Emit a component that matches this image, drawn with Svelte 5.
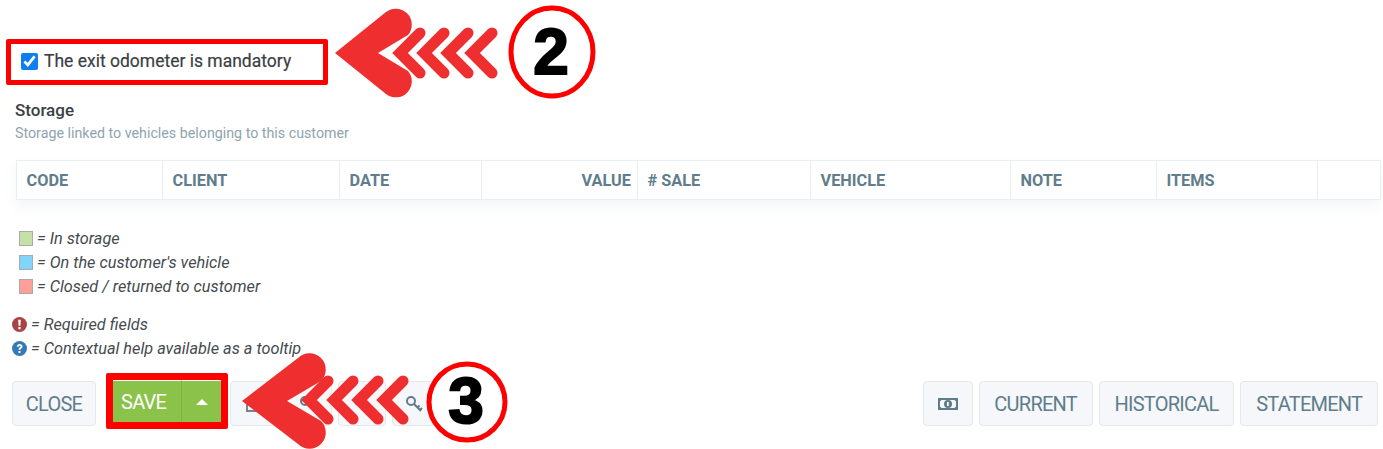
<script lang="ts">
  const columns = [
    { label: 'CODE', width: 146 },
    { label: 'CLIENT', width: 177 },
    { label: 'DATE', width: 142 },
    { label: 'VALUE', width: 156, right: true },
    { label: '# SALE', width: 173 },
    { label: 'VEHICLE', width: 200 },
    { label: 'NOTE', width: 146 },
    { label: 'ITEMS', width: 161 },
    { label: '', width: 63 }
  ];

  const legend = [
    { color: '#c5e1a5', text: '= In storage' },
    { color: '#81d4fa', text: "= On the customer's vehicle" },
    { color: '#ff9f99', text: '= Closed / returned to customer' }
  ];

  const chevronOffsets = [0, 1, 2, 3];
</script>

<div class="page">
  <div class="marked check-box">
    <label class="check">
      <input type="checkbox" checked />
      <span>The exit odometer is mandatory</span>
    </label>
  </div>

  <h4>Storage</h4>
  <p class="sub">Storage linked to vehicles belonging to this customer</p>

  <table>
    <thead>
      <tr>
        {#each columns as col}
          <th class:right={col.right} style={`width:${col.width}px`}>{col.label}</th>
        {/each}
      </tr>
    </thead>
  </table>

  <ul class="legend">
    {#each legend as item}
      <li><i class="swatch" style={`background:${item.color}`}></i>{item.text}</li>
    {/each}
  </ul>

  <ul class="notes">
    <li>
      <svg viewBox="0 0 16 16" width="15" height="15">
        <circle cx="8" cy="8" r="8" fill="#a94442" />
        <path d="M6.600 3h2.800l-.4 6.400H7zM6.800 10.600h2.400V13H6.800z" fill="#fff" />
      </svg>
      = Required fields
    </li>
    <li>
      <svg viewBox="0 0 16 16" width="15" height="15">
        <circle cx="8" cy="8" r="8" fill="#337ab7" />
        <path d="M5 6.200C5.200 4.400 6.400 3.200 8.200 3.200c1.700 0 3 1 3 2.600 0 1.300-.8 1.900-1.600 2.400-.5.300-.6.600-.6 1.100H7c0-1.200.3-1.800 1.200-2.400.6-.4.900-.6.900-1.100 0-.5-.4-.8-.9-.8-.6 0-1 .4-1.100 1zM6.900 10.600h2.200v2.200H6.900z" fill="#fff" />
      </svg>
      = Contextual help available as a tooltip
    </li>
  </ul>

  <div class="actions">
    <button class="btn close">CLOSE</button>
    <div class="marked save-box">
      <button class="save">SAVE</button>
      <button class="save caret" aria-label="More"><i></i></button>
    </div>
    <button class="btn icon first" aria-label="Copy">
      <svg viewBox="0 0 18 18" width="18" height="18" fill="none" stroke="#607d8b" stroke-width="1.800">
        <rect x="2" y="6" width="10" height="10" />
        <path d="M6 6V2h10v10h-4" />
      </svg>
    </button>
    {#each [0, 1, 2] as n}
      <button class="btn icon" class:last-key={n === 2} aria-label={`Key ${n + 1}`}>
        <svg viewBox="0 0 18 18" width="18" height="18" fill="none" stroke="#607d8b" stroke-width="2">
          <circle cx="6" cy="6" r="4" />
          <path d="M9 9l7 7M12.500 12.500l2-2M15 15l2-2" />
        </svg>
      </button>
    {/each}

    <div class="spacer"></div>

    <button class="btn icon money" aria-label="Money">
      <svg viewBox="0 0 20 14" width="20" height="14">
        <path fill-rule="evenodd" d="M0 1h20v12H0zM3.500 3 2 4.500v5L3.500 11h13l1.500-1.500v-5L16.500 3z" fill="#607d8b" />
        <circle cx="10" cy="7" r="4" fill="#607d8b" />
        <path d="M9 5h1.800v4H9z" fill="#f5f7fa" />
      </svg>
    </button>
    <button class="btn">CURRENT</button>
    <button class="btn">HISTORICAL</button>
    <button class="btn">STATEMENT</button>
  </div>

  <svg class="overlay" viewBox="0 0 1383 449" width="1383" height="449">
    <g>
      <path class="head" d="M335 53 386 12A16 16 0 0 1 408 35L378 53 408 71A16 16 0 0 1 386 94Z" />
      {#each chevronOffsets as n}
        <path class="chevron" d="M420 33 400 53 420 73" transform={`translate(${n * 24} 0)`} />
      {/each}
      <ellipse class="ring" cx="552" cy="52" rx="41" ry="44" />
      <text x="551" y="74">2</text>
    </g>
    <g>
      <path class="head" d="M242 401 298 358A16 16 0 0 1 321 381L287 401 321 421A16 16 0 0 1 298 444Z" />
      {#each chevronOffsets as n}
        <path class="chevron" d="M328 381 309 400 328 419" transform={`translate(${n * 25} 0)`} />
      {/each}
      <circle class="ring" cx="467" cy="402" r="38" />
      <text x="466" y="423">3</text>
    </g>
  </svg>
</div>

<style>
  :global(body) {
    margin: 0;
    background: #fff;
  }

  .page {
    position: relative;
    width: 1383px;
    height: 449px;
    overflow: hidden;
    box-sizing: border-box;
    padding: 39px 5px 0 12px;
    font-family: Roboto, sans-serif;
    color: #3a3f44;
  }

  .marked {
    box-sizing: border-box;
    border-style: solid;
    border-color: #f00;
    border-radius: 2px;
  }

  .check-box {
    width: 322px;
    height: 46px;
    margin-left: -6px;
    display: flex;
    align-items: center;
    padding-left: 10px;
    border-width: 5px;
  }

  .check {
    display: flex;
    align-items: center;
    gap: 6px;
    font-size: 17.500px;
    -webkit-text-stroke: 0.2px #3a3f44;
    position: relative;
    top: -1px;
  }

  .check input {
    width: 17px;
    height: 17px;
    margin: 0;
    accent-color: #0d7ff2;
  }

  h4 {
    margin: 15px 0 0 3px;
    font-size: 17px;
    line-height: 20px;
    font-weight: 500;
  }

  .sub {
    margin: 4px 0 0 3px;
    font-size: 14.250px;
    line-height: 18px;
    color: #90a4ae;
  }

  table {
    border-collapse: collapse;
    table-layout: fixed;
    width: 1364px;
    margin: 18px 0 0 4px;
    box-shadow: 0 6px 12px rgba(96, 125, 139, 0.08);
  }

  th {
    box-sizing: border-box;
    height: 39px;
    padding: 0 9.500px;
    border: 1px solid #e9eef0;
    font-size: 16.300px;
    font-weight: 700;
    text-align: left;
    color: #607d8b;
  }

  th.right {
    text-align: right;
    padding-right: 6px;
  }

  .legend,
  .notes {
    list-style: none;
    margin: 0;
    padding: 0;
    font-size: 16.300px;
    font-style: italic;
    line-height: 24px;
    color: #454a4f;
  }

  .legend {
    margin: 27px 0 0 7px;
  }

  .swatch {
    display: inline-block;
    box-sizing: border-box;
    width: 14px;
    height: 15px;
    margin-right: 4px;
    border: 1px solid #aaa;
    vertical-align: -2px;
  }

  .notes {
    margin-top: 14px;
  }

  .notes svg {
    vertical-align: -2px;
  }

  .actions {
    display: flex;
    align-items: flex-start;
    gap: 6px;
    margin-top: 20px;
  }

  .btn {
    box-sizing: border-box;
    height: 45px;
    padding: 0 14.750px;
    background: #f5f7fa;
    border: 1px solid #e4e9ec;
    border-radius: 4px;
    font: 400 20px Roboto, sans-serif;
    letter-spacing: -0.75px;
    color: #607d8b;
  }

  .btn svg {
    display: block;
    margin: 0 auto;
  }

  .close {
    width: 84px;
    padding: 0;
  }

  .icon {
    width: 48px;
    padding: 0;
  }

  .first {
    margin-left: -4px;
  }

  .last-key {
    width: 44px;
  }

  .money {
    width: 50px;
  }

  .spacer {
    flex: 1;
  }

  .save-box {
    display: flex;
    height: 56px;
    margin: -8px 0 -3px 4px;
    border-width: 7px;
    background: #fff;
  }

  .save {
    box-sizing: border-box;
    width: 68px;
    height: 42px;
    padding: 0 0 0 8px;
    background: #8bc34a;
    border: 0;
    border-top: 1px solid #fff;
    font: 400 20px Roboto, sans-serif;
    letter-spacing: -0.75px;
    text-align: left;
    color: #fff;
  }

  .caret {
    width: 40px;
    padding: 0;
    border-left: 1px solid #7cb342;
  }

  .caret i {
    display: block;
    width: 0;
    margin: 0 auto;
    border: 6px solid transparent;
    border-top: 0;
    border-bottom: 6px solid #fff;
  }

  .overlay {
    position: absolute;
    inset: 0;
    pointer-events: none;
  }

  .head {
    fill: #ef2f2f;
  }

  .chevron {
    fill: none;
    stroke: #ef2f2f;
    stroke-width: 11;
    stroke-linecap: round;
    stroke-linejoin: miter;
  }

  .ring {
    fill: #fff;
    stroke: #f00;
    stroke-width: 5;
  }

  text {
    font: 700 64px "Liberation Sans", sans-serif;
    fill: #000;
    stroke: #000;
    stroke-width: 2;
    text-anchor: middle;
  }
</style>
